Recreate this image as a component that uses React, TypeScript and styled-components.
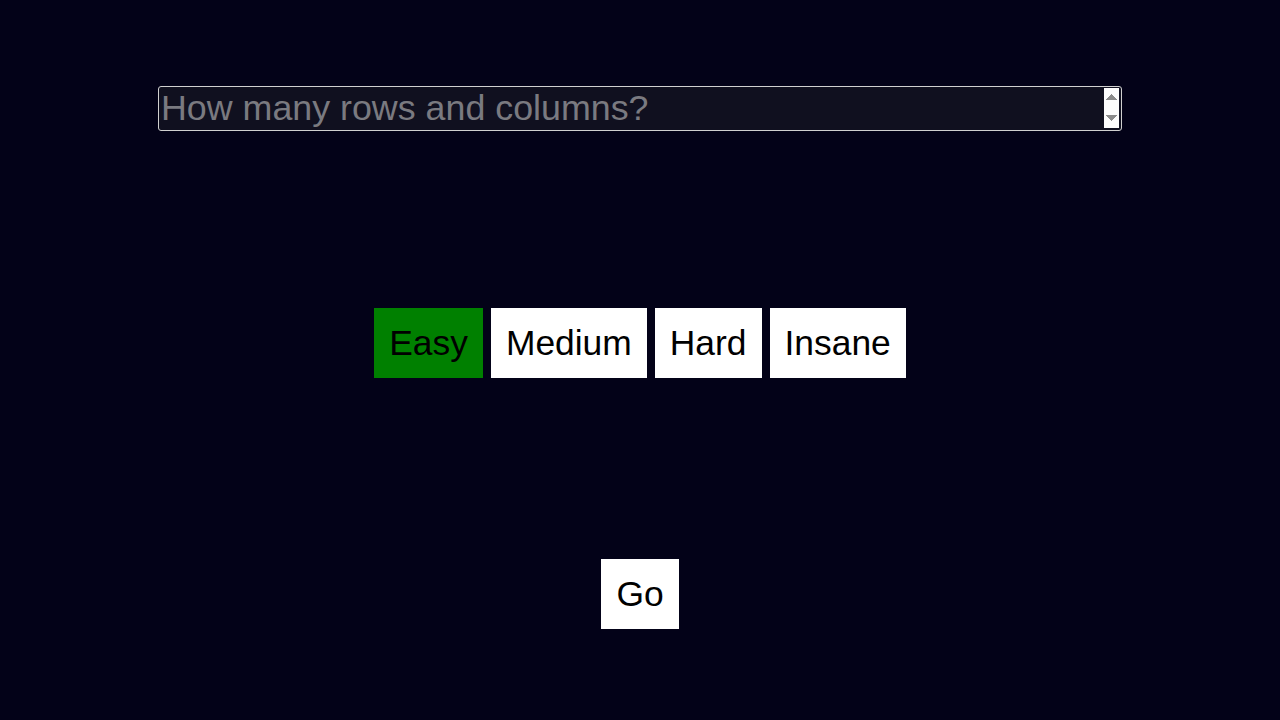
import React from "react";
import styled, { createGlobalStyle } from "styled-components";

const Global = createGlobalStyle`
  html, body { margin: 0; padding: 0; background: #030218; }
  body { font-family: "Liberation Sans", Arial, sans-serif; }
  * { box-sizing: border-box; }
`;

const Page = styled.div`
  width: 1280px;
  height: 720px;
  display: flex;
  flex-direction: column;
  align-items: center;
  padding-top: 86px;
`;

const SizeInput = styled.input`
  width: 964px;
  height: 45px;
  padding: 1px 2px;
  font-family: "Liberation Sans", Arial, sans-serif;
  font-size: 35.8px;
  color: #e0e0e0;
  background: #10101f;
  border: 1px solid #d0d0d0;
  border-radius: 3px;
  outline: none;
  &::placeholder { color: #7a7a80; }
  &::-webkit-inner-spin-button {
    opacity: 1;
    height: 41px;
  }
`;

const Levels = styled.div`
  display: flex;
  gap: 8px;
  margin-top: 177px;
`;

const Btn = styled.button<{ $active?: boolean }>`
  font-family: "Liberation Sans", Arial, sans-serif;
  font-size: 35.4px;
  line-height: 40px;
  padding: 15px 15px;
  border: none;
  border-radius: 0;
  color: #000;
  background: ${(p) => (p.$active ? "#008000" : "#ffffff")};
  cursor: pointer;
`;

const GoRow = styled.div`
  margin-top: 181px;
`;

export default function App() {
  const levels = ["Easy", "Medium", "Hard", "Insane"];
  return (
    <>
      <Global />
      <Page>
        <SizeInput type="number" placeholder="How many rows and columns?" />
        <Levels>
          {levels.map((l, i) => (
            <Btn key={l} $active={i === 0}>
              {l}
            </Btn>
          ))}
        </Levels>
        <GoRow>
          <Btn>Go</Btn>
        </GoRow>
      </Page>
    </>
  );
}
